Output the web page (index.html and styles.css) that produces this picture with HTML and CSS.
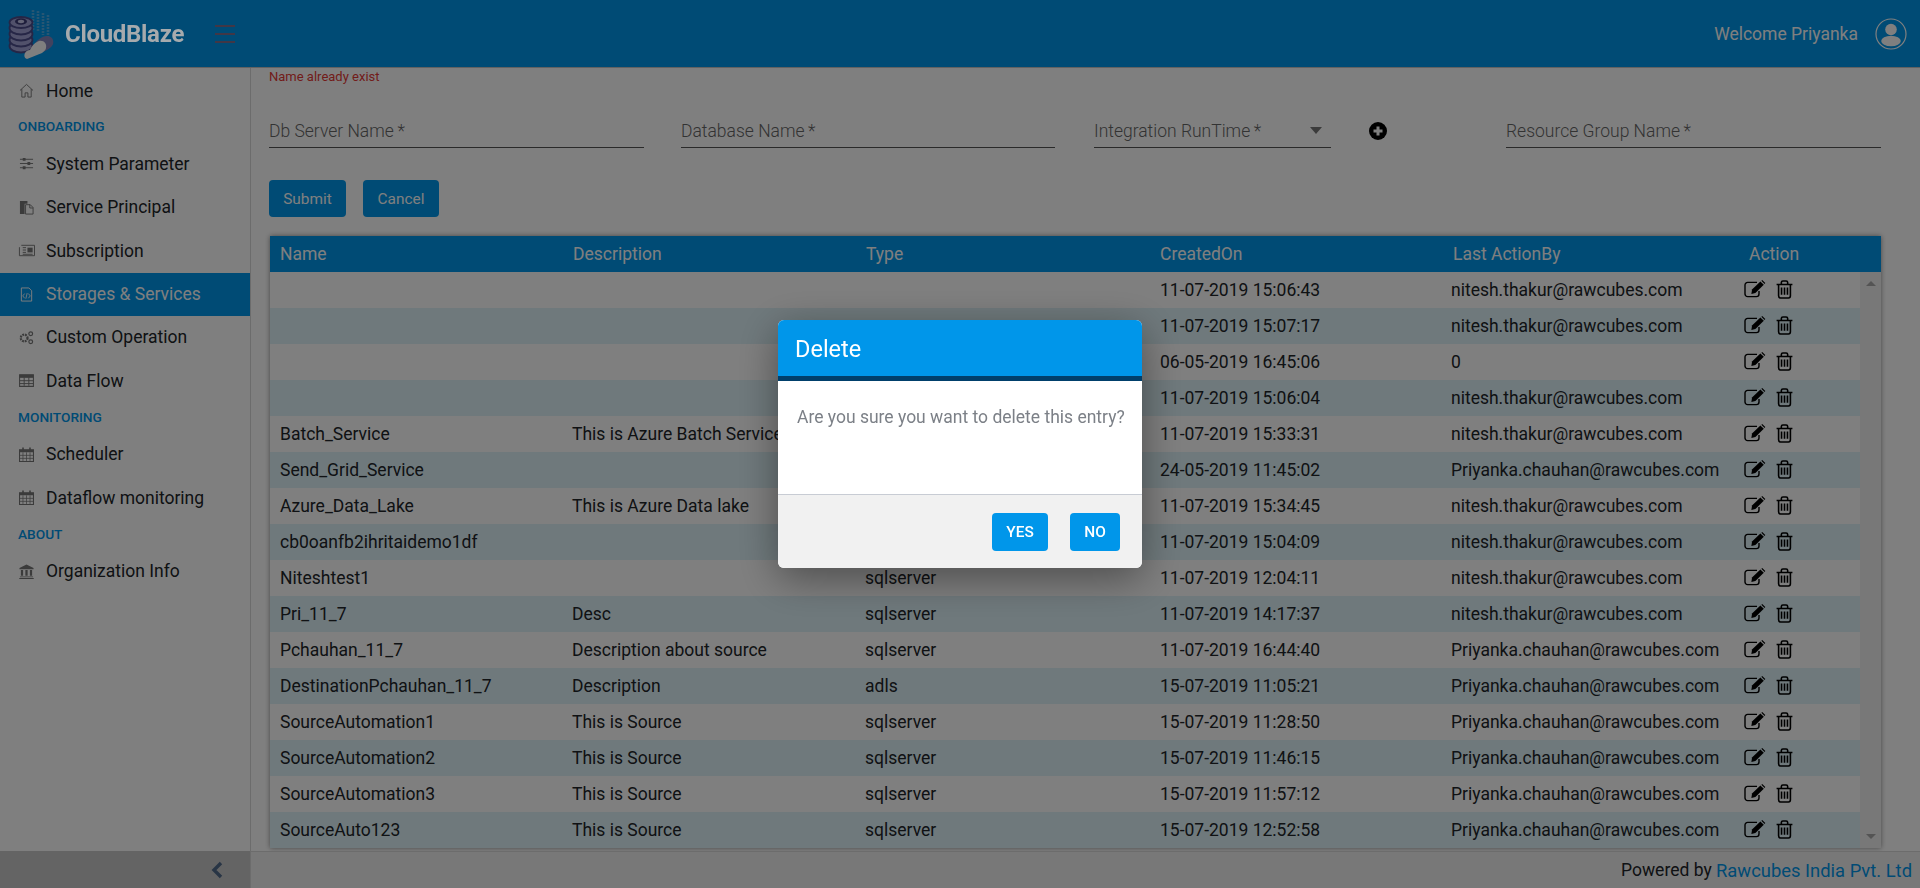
FILE: index.html
```html
<!DOCTYPE html>
<html lang="en">
<head>
    <meta charset="UTF-8">
    <title>CloudBlaze</title>
    <link rel="stylesheet" href="styles.css">
</head>
<body>
    <svg class="sprite" width="0" height="0">
        <symbol id="i-edit" viewBox="0 0 22 18">
            <path d="M15 11v3a2.6 2.6 0 0 1-2.6 2.600H3.600A2.600 2.600 0 0 1 1 14V5a2.600 2.600 0 0 1 2.600-2.600H13" fill="none" stroke="currentColor" stroke-width="1.4"/>
            <path d="M8 9.5 16.4 1.5l3.4 3.3-8.4 8.2-4 .9z" fill="currentColor"/>
            <path d="M17.4.8 18.2 0l3.1 3-.8.9z" fill="currentColor"/>
        </symbol>
        <symbol id="i-trash" viewBox="0 0 16 18">
            <path d="M.5 4.2h15M5 4V2.400C5 1.400 5.700 1 6.500 1h3c.8 0 1.500.4 1.500 1.400V4M2.400 4.500V15c0 1.200.7 2 1.800 2h7.600c1.100 0 1.800-.8 1.800-2V4.500" fill="none" stroke="currentColor" stroke-width="1.5"/>
            <path d="M5.2 7v7M8 7v7M10.8 7v7" fill="none" stroke="currentColor" stroke-width="1.5"/>
        </symbol>
        <symbol id="i-cal" viewBox="0 0 14 14">
            <path d="M.5 2.500h13v11H.5z" fill="none" stroke="currentColor"/>
            <path d="M.5 2.500h13v2.500H.5zM3 .5h1.500v3H3zM9.500.5H11v3H9.500z" fill="currentColor"/>
            <path d="M.5 7.800h13M.5 10.600h13M3.700 5v8M7 5v8M10.300 5v8" stroke="currentColor" stroke-width=".7"/>
        </symbol>
    </svg>

    <header class="topbar">
        <div class="brand">
            <svg class="logo" viewBox="8 8 46 52">
                <g fill="none" stroke="#6fb6e6" stroke-width="2.6" stroke-dasharray="2 1" opacity=".7">
                    <path d="M33 10v20M38 11v20M43 13v22M48 15v22"/>
                </g>
                <g fill="#a3a3d6" stroke="#4c4c8c" stroke-width="1.8">
                    <ellipse cx="21" cy="46" rx="11.5" ry="6.5"/>
                    <ellipse cx="21" cy="40" rx="11.5" ry="6.5"/>
                    <ellipse cx="21" cy="34" rx="11.5" ry="6.5"/>
                    <ellipse cx="21" cy="28" rx="11.5" ry="6.5"/>
                    <ellipse cx="21" cy="22.5" rx="11.5" ry="5.5"/>
                </g>
                <ellipse cx="21" cy="21.5" rx="6" ry="3.2" fill="#3c3c78"/>
                <ellipse cx="21" cy="21.5" rx="3.2" ry="1.7" fill="#c8c8ec"/>
                <path d="M33 47c3-7 9-11 14-11 5 0 7 4 6 8-1 3-4 5-10 8z" fill="#8585bd"/>
                <path d="M27 59c-3-1-3-4-2-6 1-2 3-3 5-3 2-5 6-8 9-9 5-1 8 3 7 7 0 2-2 3-4 5z" fill="#fff"/>
            </svg>
            <span class="brand-name">CloudBlaze</span>
            <div class="burger"><i></i><i></i><i></i></div>
        </div>
        <div class="user">
            <span>Welcome Priyanka</span>
            <svg class="avatar" viewBox="0 0 32 32">
                <circle cx="16" cy="16" r="15" fill="none" stroke="currentColor" stroke-width="1.2"/>
                <circle cx="16" cy="11.5" r="5.8" fill="currentColor"/>
                <ellipse cx="16" cy="23" rx="9.8" ry="5.2" fill="currentColor"/>
            </svg>
        </div>
    </header>

    <div class="layout">
        <aside class="sidebar">
            <nav class="menu">
                <a class="menu-item">
                    <svg class="menu-icon" viewBox="0 0 16 16"><path d="M1 8l7-6.500L15 8M3 6.500V15h3.500v-4.500h3V15H13V6.500" fill="none" stroke="currentColor"/></svg>
                    Home
                </a>
                <div class="menu-title">ONBOARDING</div>
                <a class="menu-item">
                    <svg class="menu-icon" viewBox="0 0 16 16"><path d="M1 3.500h14M1 8h14M1 12.500h14" stroke="currentColor"/><path d="M4 2h3v3H4zM9 6.500h3v3H9zM4 11h3v3H4z" fill="currentColor"/></svg>
                    System Parameter
                </a>
                <a class="menu-item">
                    <svg class="menu-icon" viewBox="0 0 16 16"><path d="M1 1h8v3H6v11H1z" fill="currentColor"/><path d="M7 5h5l3 3v7H7z" fill="none" stroke="currentColor"/><path d="M11.500 5v3.500H15" fill="none" stroke="currentColor"/></svg>
                    Service Principal
                </a>
                <a class="menu-item">
                    <svg class="menu-icon" viewBox="0 0 18 14"><path d="M3.500 1.500h14v11H1.500v-9" fill="none" stroke="currentColor"/><path d="M10 4h5.500v5H10z" fill="currentColor"/><path d="M5 4h3.500M5 6.500h3.500M5 9h3.500M5 11h10.500" stroke="currentColor"/></svg>
                    Subscription
                </a>
                <a class="menu-item active">
                    <svg class="menu-icon" viewBox="0 0 16 16"><path d="M2.500 1h8l3 3v11h-11z" fill="none" stroke="currentColor"/><path d="M6 7l-2 2.500L6 12M10 7l2 2.500-2 2.500M8.700 6.500l-1.400 6" fill="none" stroke="currentColor" stroke-width=".9"/></svg>
                    Storages &amp; Services
                </a>
                <a class="menu-item">
                    <svg class="menu-icon" viewBox="0 0 16 16"><circle cx="5.5" cy="8.5" r="3.6" fill="none" stroke="currentColor" stroke-width="2.4" stroke-dasharray="2 .9"/><circle cx="12.5" cy="4" r="2" fill="none" stroke="currentColor" stroke-width="1.3"/><circle cx="12.5" cy="12.5" r="2" fill="none" stroke="currentColor" stroke-width="1.3"/></svg>
                    Custom Operation
                </a>
                <a class="menu-item">
                    <svg class="menu-icon" viewBox="0 0 16 14"><path d="M1.500 1.500h13v11h-13z" fill="none" stroke="currentColor"/><path d="M1.500 1.500h13v3h-13z" fill="currentColor"/><path d="M1.500 7.200h13M1.500 9.900h13M5.800 4v8M10.200 4v8" stroke="currentColor" stroke-width=".9"/></svg>
                    Data Flow
                </a>
                <div class="menu-title">MONITORING</div>
                <a class="menu-item"><svg class="menu-icon"><use href="#i-cal"/></svg>Scheduler</a>
                <a class="menu-item"><svg class="menu-icon"><use href="#i-cal"/></svg>Dataflow monitoring</a>
                <div class="menu-title">ABOUT</div>
                <a class="menu-item">
                    <svg class="menu-icon" viewBox="0 0 16 16"><path d="M8 .5l7.500 3.800v1.200H.5V4.300zM2 6.500h2.400v6H2zM6.800 6.500h2.400v6H6.800zM11.600 6.500H14v6h-2.400zM1 13.200h14v1H1zM.3 14.800h15.400V16H.3z" fill="currentColor"/></svg>
                    Organization Info
                </a>
            </nav>
            <div class="collapse">
                <svg viewBox="0 0 12 18" width="12" height="18"><path d="M10 2 3 9l7 7" fill="none" stroke="#516a8a" stroke-width="3.4"/></svg>
            </div>
        </aside>

        <div class="main">
            <main class="content">
                <div class="error">Name already exist</div>
                <form class="fields">
                    <div class="field f-server">Db Server Name&thinsp;*</div>
                    <div class="field f-db">Database Name&thinsp;*</div>
                    <div class="field f-runtime">Integration RunTime&thinsp;*<span class="caret"></span></div>
                    <div class="plus-cell">
                        <svg class="plus" viewBox="0 0 18 18"><circle cx="9" cy="9" r="9" fill="#000"/><path d="M9 4.500v9M4.500 9h9" stroke="#fff" stroke-width="3"/></svg>
                    </div>
                    <div class="field f-group">Resource Group Name&thinsp;*</div>
                </form>
                <div class="form-buttons">
                    <button type="button" class="btn btn-submit">Submit</button>
                    <button type="button" class="btn btn-cancel">Cancel</button>
                </div>

                <section class="grid-card">
                    <div class="grid-head row">
                        <div>Name</div><div>Description</div><div>Type</div><div>CreatedOn</div><div>Last ActionBy</div><div class="head-action">Action</div>
                    </div>
                    <div class="grid-wrap">
                        <div class="grid-body" id="rows"></div>
                        <div class="scrollbar"><span class="arrow up"></span><span class="arrow down"></span></div>
                    </div>
                </section>
            </main>
            <footer class="footer">Powered by&nbsp;<a>Rawcubes India Pvt. Ltd</a></footer>
        </div>
    </div>

    <div class="backdrop"></div>
    <div class="modal">
        <div class="modal-head">Delete</div>
        <div class="modal-body">Are you sure you want to delete this entry?</div>
        <div class="modal-foot">
            <button type="button" class="btn-modal btn-yes">YES</button>
            <button type="button" class="btn-modal btn-no">NO</button>
        </div>
    </div>

    <script>
        var data = [
            ['', '', '', '11-07-2019 15:06:43', 'nitesh.thakur@rawcubes.com'],
            ['', '', '', '11-07-2019 15:07:17', 'nitesh.thakur@rawcubes.com'],
            ['', '', '', '06-05-2019 16:45:06', '0'],
            ['', '', '', '11-07-2019 15:06:04', 'nitesh.thakur@rawcubes.com'],
            ['Batch_Service', 'This is Azure Batch Service', '', '11-07-2019 15:33:31', 'nitesh.thakur@rawcubes.com'],
            ['Send_Grid_Service', '', '', '24-05-2019 11:45:02', 'Priyanka.chauhan@rawcubes.com'],
            ['Azure_Data_Lake', 'This is Azure Data lake', '', '11-07-2019 15:34:45', 'nitesh.thakur@rawcubes.com'],
            ['cb0oanfb2ihritaidemo1df', '', '', '11-07-2019 15:04:09', 'nitesh.thakur@rawcubes.com'],
            ['Niteshtest1', '', 'sqlserver', '11-07-2019 12:04:11', 'nitesh.thakur@rawcubes.com'],
            ['Pri_11_7', 'Desc', 'sqlserver', '11-07-2019 14:17:37', 'nitesh.thakur@rawcubes.com'],
            ['Pchauhan_11_7', 'Description about source', 'sqlserver', '11-07-2019 16:44:40', 'Priyanka.chauhan@rawcubes.com'],
            ['DestinationPchauhan_11_7', 'Description', 'adls', '15-07-2019 11:05:21', 'Priyanka.chauhan@rawcubes.com'],
            ['SourceAutomation1', 'This is Source', 'sqlserver', '15-07-2019 11:28:50', 'Priyanka.chauhan@rawcubes.com'],
            ['SourceAutomation2', 'This is Source', 'sqlserver', '15-07-2019 11:46:15', 'Priyanka.chauhan@rawcubes.com'],
            ['SourceAutomation3', 'This is Source', 'sqlserver', '15-07-2019 11:57:12', 'Priyanka.chauhan@rawcubes.com'],
            ['SourceAuto123', 'This is Source', 'sqlserver', '15-07-2019 12:52:58', 'Priyanka.chauhan@rawcubes.com']
        ];

        var html = '';
        data.forEach(function (r) {
            html += '<div class="row">';
            r.forEach(function (c) { html += '<div>' + c + '</div>'; });
            html += '<div class="actions"><svg class="a-edit"><use href="#i-edit"/></svg><svg class="a-trash"><use href="#i-trash"/></svg></div></div>';
        });
        document.getElementById('rows').innerHTML = html;
    </script>
</body>
</html>
```

FILE: styles.css
```css
* {
    box-sizing: border-box;
}
html, body {
    height: 100%;
}
body {
    margin: 0;
    font-family: Roboto, Arial, sans-serif;
    font-size: 17.5px;
    color: #212529;
    background-color: #fff;
    overflow: hidden;
}
.sprite {
    position: absolute;
}

/* top bar */
.topbar {
    height: 68px;
    background-color: #0096ea;
    color: #fff;
    display: flex;
    align-items: center;
    justify-content: space-between;
    padding: 0 13px 0 8px;
    border-bottom: 1px solid #c4c4c4;
}
.brand {
    display: flex;
    align-items: center;
}
.logo {
    width: 46px;
    height: 52px;
}
.brand-name {
    position: relative;
    z-index: 2;
    margin-left: 11px;
    font-size: 24px;
    font-weight: 700;
    letter-spacing: -.3px;
    width: 150px;
    color: #a6aaad;
}
.burger {
    width: 20px;
    display: flex;
    flex-direction: column;
    gap: 6px;
}
.burger i {
    display: block;
    height: 2px;
    background-color: #d9534f;
    opacity: .6;
}
.user {
    display: flex;
    align-items: center;
    gap: 17px;
}
.avatar {
    width: 32px;
    height: 32px;
}

/* sidebar */
.layout {
    display: flex;
    height: 820px;
}
.sidebar {
    width: 251px;
    border-right: 1px solid #d8d8d8;
    display: flex;
    flex-direction: column;
}
.menu {
    flex: 1;
    padding-top: 1px;
}
.menu-item {
    height: 43px;
    display: flex;
    align-items: center;
    padding-left: 18px;
    margin-bottom: .4px;
    color: #212529;
}
.menu-item.active {
    background-color: #0096ea;
    color: #fff;
}
.menu-icon {
    width: 17px;
    height: 15px;
    margin-right: 11px;
    color: #777;
    flex: none;
}
.active .menu-icon {
    color: #fff;
}
.menu-title {
    height: 30px;
    line-height: 28px;
    padding-left: 18px;
    font-size: 13.7px;
    font-weight: 500;
    color: #0096ea;
}
.collapse {
    height: 37px;
    background-color: #c8c8c8;
    display: flex;
    align-items: center;
    justify-content: flex-end;
    padding-right: 27px;
}

/* main */
.main {
    flex: 1;
    display: flex;
    flex-direction: column;
    min-width: 0;
}
.content {
    flex: 1;
    padding: 0 39px 0 18px;
}
.error {
    font-size: 13px;
    line-height: 15px;
    padding-top: 1px;
    height: 15px;
    color: #e53935;
}
.fields {
    display: flex;
    margin-top: 30px;
}
.field {
    height: 35px;
    border-bottom: 1px solid #555;
    color: #666;
    font-weight: 300;
    line-height: 24px;
    padding-top: 6px;
    position: relative;
}
.f-server, .f-group {
    width: 375px;
}
.f-server {
    margin-right: 37px;
}
.f-db {
    width: 374px;
    margin-right: 39px;
}
.f-runtime {
    width: 237px;
}
.caret {
    position: absolute;
    right: 9px;
    top: 14px;
    border-left: 6.5px solid transparent;
    border-right: 6.5px solid transparent;
    border-top: 7px solid #777;
}
.plus-cell {
    width: 175px;
    padding: 9px 0 0 38px;
}
.plus {
    display: block;
    width: 18px;
    height: 18px;
}
.form-buttons {
    display: flex;
    gap: 17px;
    margin-top: 32px;
}
.btn {
    height: 37px;
    border: 0;
    border-radius: 4px;
    background-color: #0096ea;
    color: #fff;
    font-family: inherit;
    font-size: 15.4px;
    padding: 0;
}
.btn-submit {
    width: 77px;
}
.btn-cancel {
    width: 76px;
}

/* data table */
.grid-card {
    margin-top: 19px;
    margin-left: 1px;
    box-shadow: 0 0 5px rgba(0, 0, 0, .45);
}
.row {
    display: grid;
    grid-template-columns: 293px 293px 294px 293px 293px 1fr;
    align-items: center;
    height: 36px;
}
.row > div {
    padding-left: 10px;
    white-space: nowrap;
}
.grid-head {
    background-color: #0096ea;
    color: #fff;
}
.grid-head .head-action {
    padding-left: 13px;
}
.grid-wrap {
    display: flex;
    height: 576px;
}
.grid-body {
    flex: 1;
    min-width: 0;
}
.grid-body .row:nth-child(even) {
    background-color: #dff3f9;
}
.grid-body .row {
    grid-template-columns: 292px 293px 294px 292px 295px 1fr;
}
.grid-body .row > div:nth-child(4) {
    padding-left: 11px;
}
.grid-body .row > .actions {
    display: flex;
    align-items: center;
    padding: 0 0 2px 8px;
    color: #000;
}
.a-edit {
    width: 22px;
    height: 18px;
    margin-right: 10px;
}
.a-trash {
    width: 17px;
    height: 19px;
}
.scrollbar {
    width: 21px;
    background-color: #f1f1f1;
    display: flex;
    flex-direction: column;
    justify-content: space-between;
    align-items: center;
    padding: 9px 0;
}
.arrow {
    border-left: 5px solid transparent;
    border-right: 5px solid transparent;
}
.arrow.up {
    border-bottom: 5px solid #a8a8a8;
}
.arrow.down {
    border-top: 5px solid #a8a8a8;
}
.footer {
    height: 37px;
    border-top: 1px solid #d8d8d8;
    background-color: #f1f1f1;
    display: flex;
    align-items: center;
    justify-content: flex-end;
    padding-right: 8px;
}
.footer a {
    color: #0096ea;
    font-size: 18.4px;
}

/* delete dialog */
.backdrop {
    position: fixed;
    inset: 0;
    z-index: 1;
    background-color: rgba(0, 0, 0, .5);
}
.modal {
    position: fixed;
    left: 778px;
    top: 320px;
    z-index: 3;
    width: 364px;
    height: 248px;
    display: flex;
    flex-direction: column;
    border-radius: 6px;
    overflow: hidden;
    background-color: #fff;
    box-shadow: 0 10px 40px rgba(0, 0, 0, .4);
}
.modal-head {
    height: 61px;
    background-color: #0096ea;
    border-bottom: 5px solid #003f6b;
    color: #fff;
    font-size: 23.5px;
    line-height: 58px;
    padding-left: 17px;
}
.modal-body {
    height: 113px;
    padding: 24px 0 0 19px;
    color: #7c8087;
    line-height: 24px;
    white-space: nowrap;
}
.modal-foot {
    flex: 1;
    border-top: 1px solid #c8ccd4;
    background-color: #f1f1f1;
    display: flex;
    justify-content: flex-end;
    gap: 22px;
    padding: 18px 22px 0 0;
}
.btn-modal {
    height: 38px;
    border: 0;
    border-radius: 4px;
    background-color: #0096ea;
    color: #fff;
    font-family: inherit;
    font-size: 15.4px;
    font-weight: 500;
    padding: 0;
}
.btn-yes {
    width: 56px;
}
.btn-no {
    width: 50px;
}
```
